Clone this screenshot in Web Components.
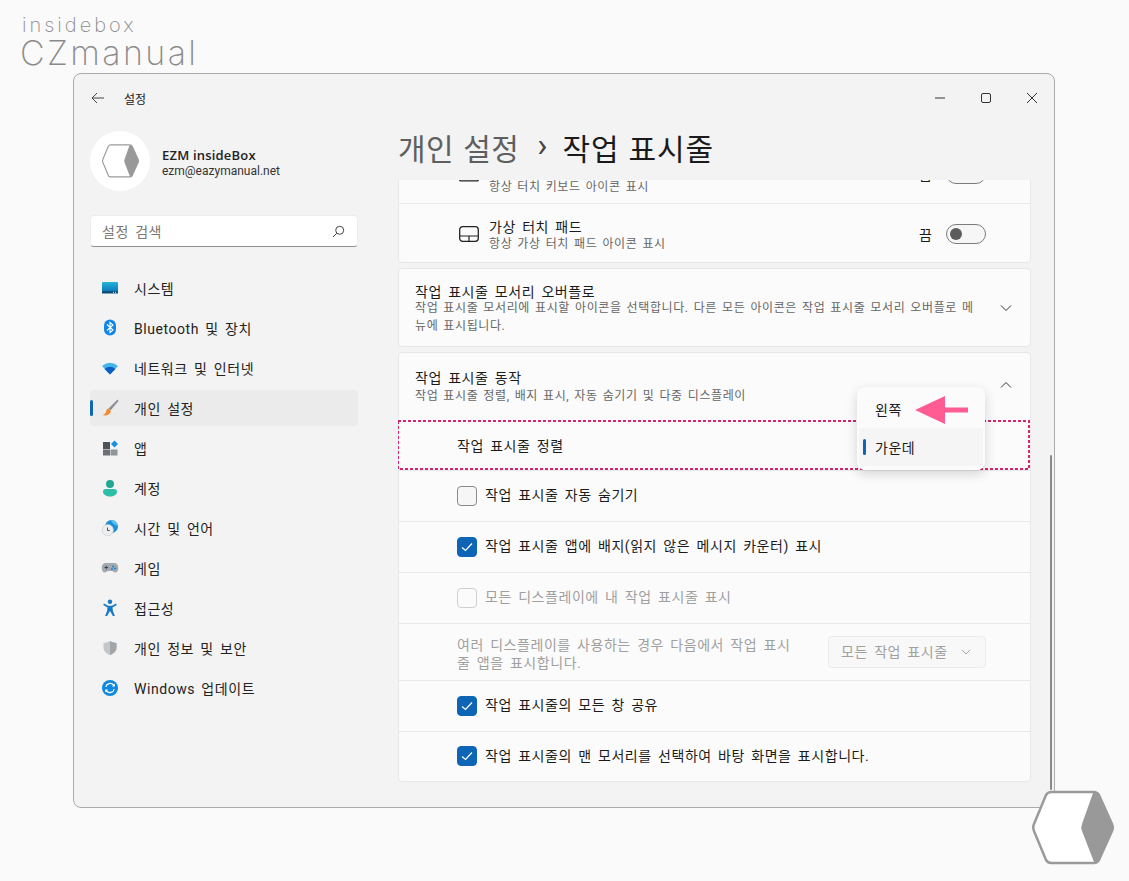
<!DOCTYPE html>
<html lang="ko">
<head>
<meta charset="utf-8">
<title>설정</title>
<style>
  html, body { margin: 0; padding: 0; background: #fafafa; }
  body { font-family: Roboto, "Noto Sans CJK KR", sans-serif; color: #1b1b1b; }
  svg { display: block; }
</style>
</head>
<body>
<settings-page>
  <settings-sidebar slot="sidebar">
    <nav-item><svg slot="icon" width="18" height="18" viewBox="0 0 18 18"><defs><linearGradient id="g1" x1="0" y1="0" x2="0" y2="1"><stop offset="0" stop-color="#27b4dc"/><stop offset="1" stop-color="#0b78b8"/></linearGradient></defs><rect x="1" y="3" width="16" height="9.5" rx="1" fill="url(#g1)"/><rect x="1" y="12" width="16" height="2.5" fill="#0b4f7d"/><rect x="12" y="12.8" width="1" height="1" fill="#cfe"/><rect x="14" y="12.8" width="1" height="1" fill="#cfe"/></svg>시스템</nav-item>
    <nav-item><svg slot="icon" width="18" height="18" viewBox="0 0 18 18"><rect x="3" y="0.5" width="12" height="16" rx="6" fill="#0f86e8"/><path d="M6 5.5l6 5.5-3 2.6V3.4l3 2.6-6 5.5" fill="none" stroke="#fff" stroke-width="1.1"/></svg>Bluetooth 및 장치</nav-item>
    <nav-item><svg slot="icon" width="18" height="18" viewBox="0 0 18 18"><path d="M1 7Q9 .5 17 7L9 15.500Z" fill="#45b5ec"/><path d="M3.500 10Q9 5.500 14.500 10L9 15.500Z" fill="#0c5fc0"/></svg>네트워크 및 인터넷</nav-item>
    <nav-item selected><svg slot="icon" width="18" height="18" viewBox="0 0 18 18"><path d="M16.500 .5L7.500 9.500l2 2L17.500 2Z" fill="#8b8f96"/><path d="M7.500 9.500c-2.500.5-2 3-3 4.500-.6.9-2 1.800-3 2 3 .9 7 .4 8.500-3.500Z" fill="#f08a2c"/></svg>개인 설정</nav-item>
    <nav-item><svg slot="icon" width="18" height="18" viewBox="0 0 18 18"><rect x="2" y="3" width="7" height="7" fill="#4c5258"/><rect x="2" y="10.500" width="7" height="6" fill="#6a7076"/><rect x="9.500" y="10.500" width="7" height="6" fill="#8f959b"/><path d="M13.500 1.500l3.500 3.500-3.500 3.500L10 5Z" fill="#1b8fdc"/></svg>앱</nav-item>
    <nav-item><svg slot="icon" width="18" height="18" viewBox="0 0 18 18"><circle cx="9" cy="5" r="4" fill="#22a892"/><path d="M2 12.500c0-1.500 1.200-2.500 2.500-2.500h9c1.300 0 2.500 1 2.500 2.500C16 16 12.500 17.500 9 17.500S2 16 2 12.500Z" fill="#2cbfa6"/></svg>계정</nav-item>
    <nav-item><svg slot="icon" width="18" height="18" viewBox="0 0 18 18"><circle cx="10.500" cy="7.500" r="6.500" fill="#1c8fd8"/><path d="M10 1.100a6.500 6.500 0 0 1 7 5.400c-2 .5-3-1-4-1.500S10.500 3.500 10 1.100Z" fill="#5cc4ee"/><circle cx="6.800" cy="11" r="5.600" fill="#eceef0" stroke="#c5c8cc" stroke-width=".6"/><path d="M6.500 8.500v3h2.200" fill="none" stroke="#555" stroke-width="1"/></svg>시간 및 언어</nav-item>
    <nav-item><svg slot="icon" width="18" height="18" viewBox="0 0 18 18"><path d="M4.500 4h9c2.500 0 3.800 2.500 3.800 5s-1.300 4.500-3 4.500c-1.500 0-2-1.500-3.300-1.500H7c-1.300 0-1.800 1.500-3.300 1.500s-3-2-3-4.500S2 4 4.500 4Z" fill="#a4a9af"/><path d="M3.500 8.500h3.500M5.250 6.800v3.500" stroke="#3b4046" stroke-width="1"/><circle cx="12" cy="7.500" r="1" fill="#1b7fd0"/><circle cx="14" cy="9.500" r="1" fill="#1b7fd0"/><circle cx="11" cy="10" r=".9" fill="#1b7fd0"/></svg>게임</nav-item>
    <nav-item><svg slot="icon" width="18" height="18" viewBox="0 0 18 18"><circle cx="9" cy="2.700" r="2.200" fill="#1379c9"/><path d="M3 4.500l4 2.200h4l4-2.200 .8 1.400-4.300 2.700.4 3.400 2 5h-2l-2.900-5-2.900 5h-2l2-5 .4-3.400L2.200 5.900Z" fill="#1379c9"/></svg>접근성</nav-item>
    <nav-item><svg slot="icon" width="18" height="18" viewBox="0 0 18 18"><path d="M9 2c2.200 1.200 4 1.700 6.500 1.900V9c0 3.400-2.900 5.600-6.500 7-3.600-1.400-6.500-3.600-6.500-7V3.900C5 3.700 6.800 3.200 9 2Z" fill="#c4c7ca"/><path d="M9 2c2.200 1.200 4 1.700 6.500 1.900V9c0 3.400-2.900 5.600-6.500 7Z" fill="#a2a6a9"/></svg>개인 정보 및 보안</nav-item>
    <nav-item><svg slot="icon" width="18" height="18" viewBox="0 0 18 18"><circle cx="9" cy="9" r="8" fill="#0f88e0"/><path d="M4.800 8a4.400 4.400 0 0 1 7.700-2l.8 1M13.200 10a4.400 4.400 0 0 1-7.700 2l-.8-1" fill="none" stroke="#fff" stroke-width="1.200"/><path d="M13.800 4.500v3h-3zM4.200 13.500v-3h3z" fill="#fff"/></svg>Windows 업데이트</nav-item>
  </settings-sidebar>

  <setting-card slot="content">
    <setting-row>
      <svg slot="icon" width="20" height="16" viewBox="0 0 20 16"><rect x=".7" y=".7" width="18.600" height="14.200" rx="1" fill="none" stroke="#222" stroke-width="1.300"/></svg>
      <span slot="sub">항상 터치 키보드 아이콘 표시</span>
      <off-toggle slot="end"></off-toggle>
    </setting-row>
    <setting-row divided>
      <svg slot="icon" width="20" height="16" viewBox="0 0 20 16"><rect x=".7" y=".7" width="18.600" height="14.600" rx="3" fill="none" stroke="#222" stroke-width="1.300"/><path d="M1 10h18M10 10v5" stroke="#222" stroke-width="1.200"/></svg>
      <span slot="title">가상 터치 패드</span>
      <span slot="sub">항상 가상 터치 패드 아이콘 표시</span>
      <off-toggle slot="end"></off-toggle>
    </setting-row>
  </setting-card>

  <setting-card slot="content">
    <card-header>
      <span slot="title">작업 표시줄 모서리 오버플로</span>
      <span slot="sub">작업 표시줄 모서리에 표시할 아이콘을 선택합니다. 다른 모든 아이콘은 작업 표시줄 모서리 오버플로 메뉴에 표시됩니다.</span>
    </card-header>
  </setting-card>

  <setting-card slot="content">
    <card-header open>
      <span slot="title">작업 표시줄 동작</span>
      <span slot="sub">작업 표시줄 정렬, 배지 표시, 자동 숨기기 및 다중 디스플레이</span>
    </card-header>
    <align-row>작업 표시줄 정렬</align-row>
    <check-row>작업 표시줄 자동 숨기기</check-row>
    <check-row checked>작업 표시줄 앱에 배지(읽지 않은 메시지 카운터) 표시</check-row>
    <check-row disabled>모든 디스플레이에 내 작업 표시줄 표시</check-row>
    <display-row></display-row>
    <check-row checked>작업 표시줄의 모든 창 공유</check-row>
    <check-row checked>작업 표시줄의 맨 모서리를 선택하여 바탕 화면을 표시합니다.</check-row>
  </setting-card>
</settings-page>

<script>
const SPACED = `letter-spacing: .55px; word-spacing: 2.300px;`;
const SMALL = `letter-spacing: .6px; word-spacing: 1.500px;`;
const HEX = (size) => `
  <svg width="${size}" viewBox="0 0 82 75">
    <path d="M19 2H62Q65 2 67 5L80 34Q81.500 37.500 80 41L67 70Q65 73 62 73H19Q16 73 14 70L2 41Q.5 37.500 2 34L14 5Q16 2 19 2Z" fill="#fff" stroke="#9a9a9a" stroke-width="2.500"/>
    <path d="M61 3Q64 2 67 5L80 34Q81.500 37.500 80 41L67 70Q65 73 62 72L50 41Q48.500 37.500 50 34Z" fill="#999"/>
  </svg>`;

class SettingsPage extends HTMLElement {
  constructor() {
    super();
    this.attachShadow({ mode: "open" });
    this.shadowRoot.innerHTML = `
      <style>
        :host { display: block; width: 1129px; height: 881px; position: relative; overflow: hidden; background: #fafafa; }
        .mark { height: 73px; box-sizing: border-box; padding: 15px 0 0 20px; color: #8a8a8a; font-family: "Inter", sans-serif; font-weight: 200; line-height: 1; }
        .mark .top { font-size: 20px; letter-spacing: 3px; height: 21px; padding-left: 2px; }
        .mark .low { font-size: 34px; letter-spacing: 2.400px; }
        .win { margin-left: 73px; width: 982px; height: 735px; box-sizing: border-box; border: 1px solid #ababab; border-radius: 8px; background: #f3f3f3; display: flex; flex-direction: column; overflow: hidden; }
        .bar { height: 48px; flex: none; display: flex; align-items: center; padding-left: 17px; font-size: 12px; color: #222; }
        .bar .back { margin-right: 20px; }
        .bar .controls { margin-left: auto; display: flex; align-items: center; gap: 36px; padding-right: 17px; }
        .body { flex: 1; min-height: 0; display: flex; }
        .side { width: 324px; flex: none; box-sizing: border-box; padding: 0 40px 0 16px; }
        .main { flex: 1; min-width: 0; display: flex; flex-direction: column; }
        h1 { margin: 0; height: 58px; box-sizing: border-box; padding: 0 0 8px 0; flex: none; display: flex; align-items: center; font-size: 30px; font-weight: 400; color: #5f5f5f; letter-spacing: .5px; word-spacing: 1px; }
        h1 b { font-weight: 400; color: #1a1a1a; letter-spacing: .8px; }
        h1 i { font-style: normal; margin: 0 14.500px 0 18px; font-size: 34px; line-height: 30px; position: relative; top: -2px; color: #444; }
        .scroll { flex: 1; min-height: 0; overflow: hidden; position: relative; padding-right: 23px; }
        .list { margin-top: -36px; display: flex; flex-direction: column; }
        .thumb { position: absolute; right: 2px; top: 275px; width: 2px; height: 335px; background: #8a8a8a; border-radius: 1px; }
        .badge { position: absolute; left: 1032px; top: 790px; }
      </style>
      <div class="mark"><div class="top">insidebox</div><div class="low">CZmanual</div></div>
      <div class="win">
        <div class="bar">
          <svg class="back" width="13" height="12" viewBox="0 0 13 12"><path d="M6 1L1 6l5 5M1 6h12" fill="none" stroke="#444" stroke-width="1"/></svg>
          <span>설정</span>
          <div class="controls">
            <svg width="10" height="10" viewBox="0 0 10 10"><path d="M0 5h10" stroke="#333" stroke-width="1"/></svg>
            <svg width="10" height="10" viewBox="0 0 10 10"><rect x=".5" y=".5" width="9" height="9" rx="1.500" fill="none" stroke="#333" stroke-width="1"/></svg>
            <svg width="10" height="10" viewBox="0 0 10 10"><path d="M0 0l10 10M10 0L0 10" stroke="#333" stroke-width="1"/></svg>
          </div>
        </div>
        <div class="body">
          <div class="side"><slot name="sidebar"></slot></div>
          <div class="main">
            <h1><span>개인 설정</span><i>›</i><b>작업 표시줄</b></h1>
            <div class="scroll">
              <div class="list"><slot name="content"></slot></div>
              <div class="thumb"></div>
            </div>
          </div>
        </div>
      </div>
      <div class="badge">${HEX(82)}</div>`;
  }
}
customElements.define("settings-page", SettingsPage);

class SettingsSidebar extends HTMLElement {
  constructor() {
    super();
    this.attachShadow({ mode: "open" });
    this.shadowRoot.innerHTML = `
      <style>
        :host { display: block; color: #1b1b1b; }
        .who { display: flex; align-items: center; gap: 12px; margin-top: 9px; }
        .pic { width: 60px; height: 60px; border-radius: 50%; background: #fff; display: flex; align-items: center; justify-content: center; }
        .txt { padding-top: 4px; }
        .name { font-family: "Open Sans", sans-serif; font-size: 13px; font-weight: 600; line-height: 17px; color: #222; letter-spacing: .2px; }
        .mail { font-size: 12px; line-height: 15px; color: #333; }
        .search { margin: 24px 0 23px; height: 32px; box-sizing: border-box; background: #fff; border-radius: 4px; border: 1px solid #ededed; border-bottom: 1px solid #8f8f8f; display: flex; align-items: center; justify-content: space-between; padding: 0 12px 0 11px; font-size: 14px; color: #777; ${SPACED} }
        .items { display: flex; flex-direction: column; gap: 4px; }
      </style>
      <div class="who">
        <div class="pic">${HEX(37)}</div>
        <div class="txt"><div class="name">EZM insideBox</div><div class="mail">ezm@eazymanual.net</div></div>
      </div>
      <div class="search"><span>설정 검색</span>
        <svg width="13" height="13" viewBox="0 0 13 13"><circle cx="7.700" cy="5.300" r="4" fill="none" stroke="#444" stroke-width="1"/><path d="M4.800 8.200L1 12" stroke="#444" stroke-width="1"/></svg>
      </div>
      <div class="items"><slot></slot></div>`;
  }
}
customElements.define("settings-sidebar", SettingsSidebar);

class NavItem extends HTMLElement {
  constructor() {
    super();
    this.attachShadow({ mode: "open" });
    this.shadowRoot.innerHTML = `
      <style>
        :host { display: flex; align-items: center; height: 36px; border-radius: 4px; position: relative; font-size: 14px; color: #222; ${SPACED} }
        :host([selected]) { background: #ebebeb; }
        :host([selected])::before { content: ""; position: absolute; left: 0; top: 10px; width: 3px; height: 16px; border-radius: 2px; background: #0f65b5; }
        .ic { width: 18px; height: 18px; margin: 0 15px 0 11px; }
      </style>
      <div class="ic"><slot name="icon"></slot></div><slot></slot>`;
  }
}
customElements.define("nav-item", NavItem);

class SettingCard extends HTMLElement {
  constructor() {
    super();
    this.attachShadow({ mode: "open" });
    this.shadowRoot.innerHTML = `
      <style>
        :host { display: block; background: #fbfbfb; border: 1px solid #e7e7e7; border-radius: 4px; margin-bottom: 5px; }
      </style>
      <slot></slot>`;
  }
}
customElements.define("setting-card", SettingCard);

class SettingRow extends HTMLElement {
  constructor() {
    super();
    this.attachShadow({ mode: "open" });
    this.shadowRoot.innerHTML = `
      <style>
        :host { display: flex; align-items: center; height: 58px; box-sizing: border-box; padding: 0 44px 0 60px; }
        :host([divided]) { height: 59px; border-top: 1px solid #ebebeb; padding-top: 1px; }
        .ic { width: 20px; margin-right: 10px; }
        .tx { flex: 1; padding-top: 7px; }
        :host([divided]) .tx { padding-top: 2px; }
        .t { font-size: 14px; line-height: 19px; min-height: 19px; color: #1b1b1b; ${SPACED} }
        .s { font-size: 12px; line-height: 15px; color: #666; ${SMALL} }
      </style>
      <div class="ic"><slot name="icon"></slot></div>
      <div class="tx"><div class="t"><slot name="title"></slot></div><div class="s"><slot name="sub"></slot></div></div>
      <slot name="end"></slot>`;
  }
}
customElements.define("setting-row", SettingRow);

class OffToggle extends HTMLElement {
  constructor() {
    super();
    this.attachShadow({ mode: "open" });
    this.shadowRoot.innerHTML = `
      <style>
        :host { display: flex; align-items: center; gap: 14px; font-size: 14px; color: #1b1b1b; }
        .sw { width: 40px; height: 20px; box-sizing: border-box; border: 1px solid #7c7c7c; border-radius: 10px; background: #f6f6f6; display: flex; align-items: center; padding-left: 3px; }
        .sw i { width: 12px; height: 12px; border-radius: 50%; background: #5c5c5c; }
      </style>
      <span>끔</span><div class="sw"><i></i></div>`;
  }
}
customElements.define("off-toggle", OffToggle);

class CardHeader extends HTMLElement {
  constructor() {
    super();
    this.attachShadow({ mode: "open" });
    const d = this.hasAttribute("open") ? "M1 6.500L6 1.500l5 5" : "M1 1.500l5 5 5-5";
    this.shadowRoot.innerHTML = `
      <style>
        :host { display: flex; align-items: center; box-sizing: border-box; padding: 0 18px 0 16px; height: 77px; }
        :host([open]) { height: 67px; padding-top: 18px; align-items: flex-start; }
        .tx { flex: 1; max-width: 563px; padding-top: 4px; }
        :host([open]) .tx { padding-top: 0; }
        :host([open]) .t { margin-bottom: 2px; }
        .t { font-size: 14px; line-height: 14px; color: #1b1b1b; ${SPACED} }
        .s { font-size: 12px; line-height: 18px; color: #666; ${SMALL} }
        svg { margin-left: auto; }
        :host([open]) svg { margin-top: 10px; }
      </style>
      <div class="tx"><div class="t"><slot name="title"></slot></div><div class="s"><slot name="sub"></slot></div></div>
      <svg width="12" height="8" viewBox="0 0 12 8"><path d="${d}" fill="none" stroke="#333" stroke-width="1"/></svg>`;
  }
}
customElements.define("card-header", CardHeader);

class AlignRow extends HTMLElement {
  constructor() {
    super();
    this.attachShadow({ mode: "open" });
    this.shadowRoot.innerHTML = `
      <style>
        :host { display: flex; align-items: center; height: 50px; box-sizing: border-box; padding-left: 58px; position: relative; font-size: 14px; color: #1b1b1b; ${SPACED} }
        .dash { position: absolute; left: -2px; top: 0; }
        .menu { position: absolute; left: 458px; top: -33px; width: 128px; height: 83px; box-sizing: border-box; background: #fbfbfb; border-radius: 8px; box-shadow: 0 4px 12px rgba(0,0,0,.16); display: flex; flex-direction: column; padding: 3px 2px; }
        .opt { height: 38px; flex: none; display: flex; align-items: center; padding: 0 0 1px 16px; box-sizing: border-box; position: relative; border-radius: 4px; color: #1b1b1b; }
        .opt.on { background: #f5f5f5; }
        .opt.on::before { content: ""; position: absolute; left: 4px; top: 11px; width: 3px; height: 16px; border-radius: 2px; background: #0f65b5; }
        .arrow { position: absolute; left: 57px; top: 8px; }
      </style>
      <slot></slot>
      <svg class="dash" width="633" height="50" viewBox="0 0 633 50"><rect x="1" y="1" width="631" height="48" fill="none" stroke="#d6246e" stroke-width="2" stroke-dasharray="3 2"/></svg>
      <div class="menu">
        <div class="opt">왼쪽</div>
        <div class="opt on">가운데</div>
        <svg class="arrow" width="54" height="30" viewBox="0 0 54 30"><path d="M1 15L31 1V12.500H54V17.500H31V29Z" fill="#ff5c93"/></svg>
      </div>`;
  }
}
customElements.define("align-row", AlignRow);

class CheckRow extends HTMLElement {
  constructor() {
    super();
    this.attachShadow({ mode: "open" });
    this.shadowRoot.innerHTML = `
      <style>
        :host { display: flex; align-items: center; height: 51px; box-sizing: border-box; border-top: 1px solid #e8e8e8; padding-left: 58px; font-size: 14px; color: #1b1b1b; ${SPACED} }
        :host(:last-child) { height: 50px; }
        .box { width: 20px; height: 20px; box-sizing: border-box; border: 1px solid #8a8a8a; border-radius: 4px; background: #f6f6f6; margin: 0 8px 1px 0; display: flex; align-items: center; justify-content: center; }
        .lbl { padding-bottom: 4px; }
        :host([checked]) .box { background: #0f65b5; border-color: #0f65b5; }
        :host([disabled]) { color: #a0a0a0; }
        :host([disabled]) .box { border-color: #cfcfcf; background: #fbfbfb; }
      </style>
      <div class="box">${this.hasAttribute("checked") ? `<svg width="12" height="10" viewBox="0 0 12 10"><path d="M1 5.500l3.500 3L11 1.500" fill="none" stroke="#fff" stroke-width="1.200"/></svg>` : ""}</div>
      <div class="lbl"><slot></slot></div>`;
  }
}
customElements.define("check-row", CheckRow);

class DisplayRow extends HTMLElement {
  constructor() {
    super();
    this.attachShadow({ mode: "open" });
    this.shadowRoot.innerHTML = `
      <style>
        :host { display: flex; align-items: center; height: 57px; box-sizing: border-box; border-top: 1px solid #e8e8e8; padding-left: 58px; font-size: 14px; line-height: 18px; color: #a0a0a0; ${SPACED} }
        .tx { width: 342px; padding-top: 4px; }
        .sel { margin-left: 29px; width: 158px; height: 32px; box-sizing: border-box; border: 1px solid #ececec; border-radius: 4px; background: #f8f8f8; display: flex; align-items: center; justify-content: space-between; padding: 0 14px 0 12px; }
      </style>
      <div class="tx">여러 디스플레이를 사용하는 경우 다음에서 작업 표시줄 앱을 표시합니다.</div>
      <div class="sel"><span>모든 작업 표시줄</span><svg width="10" height="6" viewBox="0 0 10 6"><path d="M1 1l4 4 4-4" fill="none" stroke="#a0a0a0" stroke-width="1"/></svg></div>`;
  }
}
customElements.define("display-row", DisplayRow);
</script>
</body>
</html>
